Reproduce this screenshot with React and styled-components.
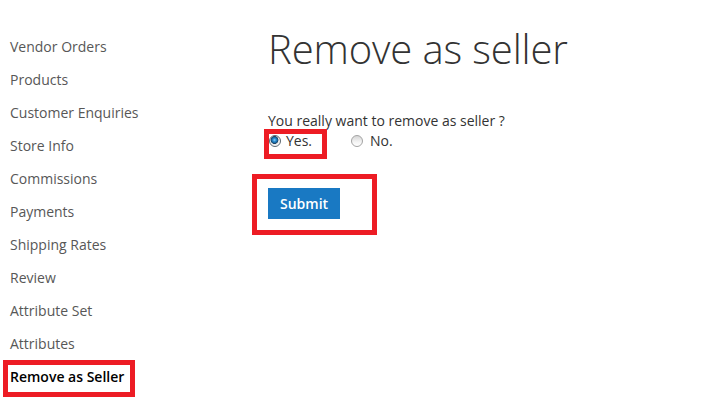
import React from 'react';
import styled, { createGlobalStyle } from 'styled-components';

const GlobalStyle = createGlobalStyle`
  html, body {
    margin: 0;
    padding: 0;
    background: #ffffff;
  }
  body {
    font-family: "Open Sans", "Liberation Sans", sans-serif;
    font-size: 14px;
    color: #333333;
  }
`;

const Page = styled.div`
  display: flex;
  width: 702px;
  height: 400px;
  overflow: hidden;
`;

const Sidebar = styled.nav`
  width: 268px;
  flex-shrink: 0;
  padding-top: 30px;
`;

const NavList = styled.ul`
  list-style: none;
  margin: 0;
  padding: 0;
`;

const NavItem = styled.li`
  position: relative;
  height: 33px;
  line-height: 33px;
  padding-left: 10px;
  font-size: 14px;
  color: ${p => (p.$active ? '#000000' : '#575757')};
  font-weight: ${p => (p.$active ? 600 : 400)};
  white-space: nowrap;

  ${p => p.$active && `
    &::after {
      content: '';
      position: absolute;
      left: 3px;
      top: 0;
      width: 132px;
      height: 37px;
      box-sizing: border-box;
      border: 5px solid #ed1c24;
    }
  `}
`;

const Main = styled.main`
  flex: 1;
  padding-top: 25px;
`;

const Title = styled.h1`
  margin: 0;
  font-size: 40px;
  line-height: 48px;
  font-weight: 300;
  letter-spacing: -0.12px;
  color: #333333;
`;

const Question = styled.p`
  margin: 38px 0 0;
  line-height: 20px;
  font-size: 14px;
  color: #333333;
`;

const RadioRow = styled.div`
  display: flex;
  align-items: center;
  gap: 38px;
  line-height: 20px;
`;

const RadioLabel = styled.label`
  position: relative;
  display: flex;
  align-items: center;
  gap: ${p => (p.$highlight ? '5px' : '7px')};
  font-size: 14px;
  color: #333333;

  ${p => p.$highlight && `
    &::after {
      content: '';
      position: absolute;
      left: -4px;
      right: -15px;
      top: -2px;
      height: 30px;
      box-sizing: border-box;
      border: 5px solid #ed1c24;
    }
  `}
`;

const Radio = styled.input.attrs({ type: 'radio' })`
  appearance: none;
  margin: 0 0 0 1px;
  width: 12px;
  height: 12px;
  border-radius: 50%;
  box-sizing: border-box;
  border: 1px solid ${p => (p.checked ? '#5b6770' : '#a3a3a3')};
  background: ${p =>
    p.checked
      ? 'radial-gradient(circle at 45% 40%, #8fd3f5 0, #2a8cd0 1.6px, #155f95 3px, #1b3e5c 3.6px, #e8e8e8 4.2px, #f8f8f8 6px)'
      : 'linear-gradient(180deg, #d6d6d6 0%, #f4f4f4 60%, #ffffff 100%)'};
`;

const Actions = styled.div`
  position: relative;
  display: inline-block;
  margin-top: 37px;

  &::after {
    content: '';
    position: absolute;
    left: -16px;
    top: -14px;
    right: -37px;
    bottom: -16px;
    border: 5px solid #ed1c24;
  }
`;

const SubmitButton = styled.button`
  display: block;
  height: 31px;
  padding: 0 12px;
  border: none;
  background: #1979c3;
  color: #ffffff;
  font-family: "Open Sans", "Liberation Sans", sans-serif;
  font-size: 14px;
  font-weight: 600;
  cursor: pointer;
`;

const menu = [
  'Vendor Orders',
  'Products',
  'Customer Enquiries',
  'Store Info',
  'Commissions',
  'Payments',
  'Shipping Rates',
  'Review',
  'Attribute Set',
  'Attributes',
  'Remove as Seller',
];

export default function App() {
  const [choice, setChoice] = React.useState('yes');

  return (
    <>
      <GlobalStyle />
      <Page>
        <Sidebar>
          <NavList>
            {menu.map(item => (
              <NavItem key={item} $active={item === 'Remove as Seller'}>
                {item}
              </NavItem>
            ))}
          </NavList>
        </Sidebar>
        <Main>
          <Title>Remove as seller</Title>
          <Question>You really want to remove as seller ?</Question>
          <RadioRow>
            <RadioLabel $highlight>
              <Radio
                name="remove"
                checked={choice === 'yes'}
                onChange={() => setChoice('yes')}
              />
              Yes.
            </RadioLabel>
            <RadioLabel>
              <Radio
                name="remove"
                checked={choice === 'no'}
                onChange={() => setChoice('no')}
              />
              No.
            </RadioLabel>
          </RadioRow>
          <Actions>
            <SubmitButton type="button">Submit</SubmitButton>
          </Actions>
        </Main>
      </Page>
    </>
  );
}
